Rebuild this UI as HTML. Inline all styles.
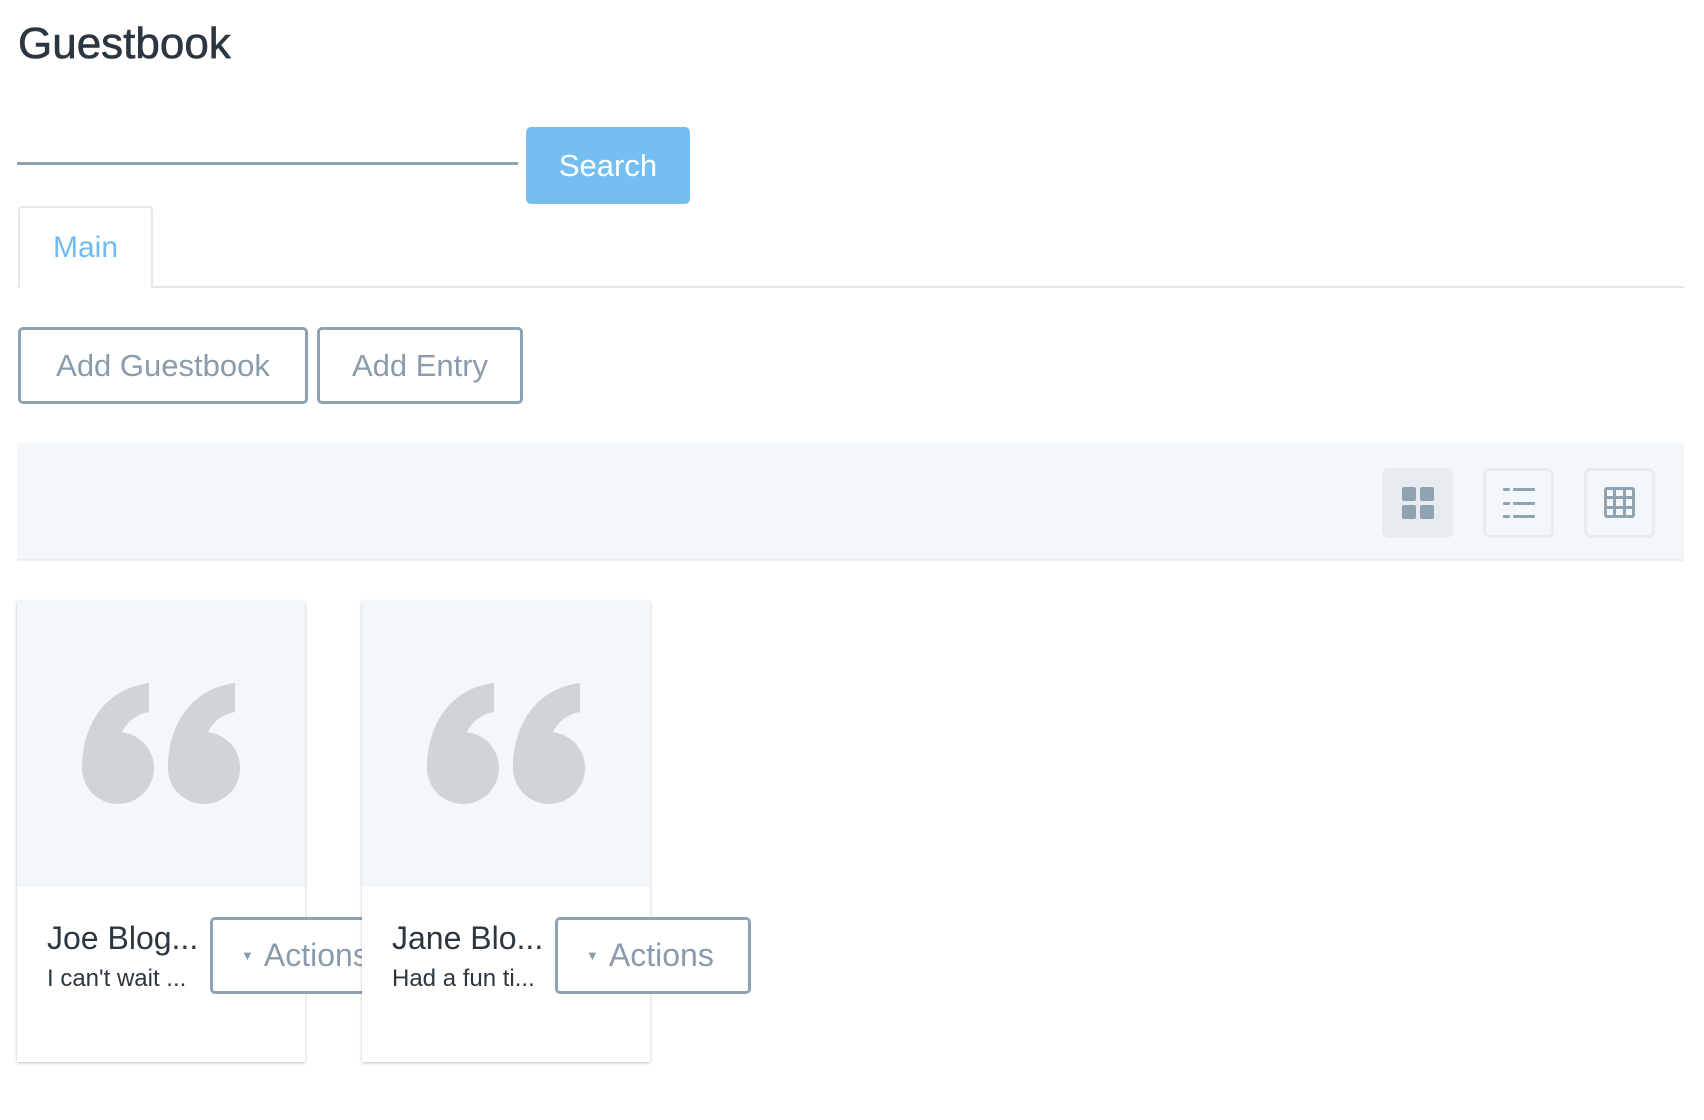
<!DOCTYPE html>
<html><head><meta charset="utf-8"><style>
*{margin:0;padding:0;box-sizing:border-box}
body{width:1704px;height:1120px;background:#fff;font-family:"Liberation Sans",Arial,sans-serif;position:relative;overflow:hidden}
.a{position:absolute}
h1{position:absolute;left:18px;top:19px;font-size:44px;font-weight:normal;color:#2c3640;-webkit-text-stroke:0.6px #2c3640}
.btn{position:absolute;border:3px solid #8fa3b3;border-radius:5px;color:#8a9cac;font-size:31px;display:flex;align-items:center;justify-content:center;background:#fff}
.ib{position:absolute;top:468px;width:71px;height:70px;border:3px solid #e8ecf0;border-radius:7px;display:flex;align-items:center;justify-content:center}
.card{position:absolute;top:601px;width:288px;height:461px;background:#fff;box-shadow:0 1px 3px rgba(0,0,0,.25)}
.img{position:absolute;left:0;top:0;width:100%;height:286px;background:#f3f6fa}
.nm{position:absolute;top:920px;font-size:32px;color:#2c3640}
.sb{position:absolute;top:965px;font-size:24px;color:#2c3640}
</style></head><body>
<h1>Guestbook</h1>
<div class="a" style="left:17px;top:162px;width:501px;height:3px;background:#8fa3b3"></div>
<div class="a" style="left:526px;top:127px;width:164px;height:77px;background:#74bff0;border-radius:5px;color:#fff;font-size:31px;display:flex;align-items:center;justify-content:center">Search</div>
<div class="a" style="left:17px;top:286px;width:1667px;height:2px;background:#e3e6e9"></div>
<div class="a" style="left:18px;top:206px;width:135px;height:82px;border:2px solid #e6e8ea;border-bottom:none;border-radius:4px 4px 0 0;background:#fff;color:#6fbaf0;font-size:30px;display:flex;align-items:center;justify-content:center">Main</div>
<div class="btn" style="left:18px;top:327px;width:290px;height:77px">Add Guestbook</div>
<div class="btn" style="left:317px;top:327px;width:206px;height:77px">Add Entry</div>
<div class="a" style="left:17px;top:443px;width:1667px;height:118px;background:#f4f7fa;border-bottom:2px solid #eceff2"></div>
<div class="ib" style="left:1382px;background:#e7ebef;border-color:#e7ebef"><svg width="32" height="32"><rect x="0" y="0" width="14" height="14" rx="2" fill="#8fa3b3"/><rect x="18" y="0" width="14" height="14" rx="2" fill="#8fa3b3"/><rect x="0" y="18" width="14" height="14" rx="2" fill="#8fa3b3"/><rect x="18" y="18" width="14" height="14" rx="2" fill="#8fa3b3"/></svg></div>
<div class="ib" style="left:1483px"><svg width="32" height="32" fill="#8fa3b3"><rect x="0" y="1" width="7" height="3" rx="1"/><rect x="10" y="1" width="22" height="3" rx="1"/><rect x="0" y="15" width="7" height="3" rx="1"/><rect x="10" y="15" width="22" height="3" rx="1"/><rect x="0" y="28" width="7" height="3" rx="1"/><rect x="10" y="28" width="22" height="3" rx="1"/></svg></div>
<div class="ib" style="left:1584px"><svg width="32" height="32"><rect x="0" y="0" width="31" height="31" rx="3" fill="#8fa3b3"/><g fill="#f4f7fa"><rect x="3" y="3" width="6" height="6"/><rect x="12" y="3" width="7" height="6"/><rect x="22" y="3" width="6" height="6"/><rect x="3" y="12" width="6" height="7"/><rect x="12" y="12" width="7" height="7"/><rect x="22" y="12" width="6" height="7"/><rect x="3" y="22" width="6" height="6"/><rect x="12" y="22" width="7" height="6"/><rect x="22" y="22" width="6" height="6"/></g></svg></div>

<svg width="0" height="0" style="position:absolute"><defs><g id="q"><circle cx="36" cy="85" r="36"/><path d="M67 0 L67 29 C50 32 40 44 37 58 L0 85 C0 40 25 5 67 0 Z"/></g></defs></svg>

<div class="card" style="left:17px">
<div class="img"><svg width="288" height="286" fill="#d0d4d9"><use href="#q" x="65" y="82"/><use href="#q" x="151" y="82"/></svg></div>
</div>
<div class="nm" style="left:47px">Joe Blog...</div>
<div class="sb" style="left:47px">I can't wait ...</div>
<div class="btn" style="left:210px;top:917px;width:196px;height:77px;justify-content:flex-start;padding-left:28px;font-size:32px"><span style="font-size:13px;margin-right:10px">&#9660;</span>Actions</div>

<div class="card" style="left:362px">
<div class="img"><svg width="288" height="286" fill="#d0d4d9"><use href="#q" x="65" y="82"/><use href="#q" x="151" y="82"/></svg></div>
</div>
<div class="nm" style="left:392px">Jane Blo...</div>
<div class="sb" style="left:392px">Had a fun ti...</div>
<div class="btn" style="left:555px;top:917px;width:196px;height:77px;justify-content:flex-start;padding-left:28px;font-size:32px"><span style="font-size:13px;margin-right:10px">&#9660;</span>Actions</div>
</body></html>
